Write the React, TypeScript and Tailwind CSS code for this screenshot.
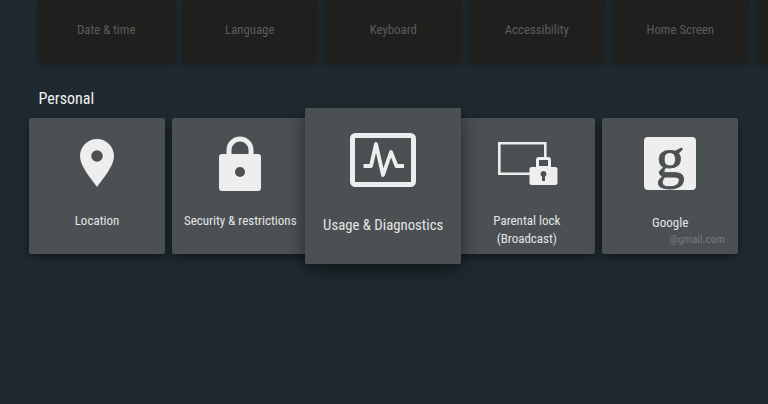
const rowFont = "font-['Roboto',sans-serif] [font-stretch:75%]";

function PinIcon() {
  return (
    <svg width="34" height="48" viewBox="0 0 34 48" className="mt-[21px]">
      <path
        fillRule="evenodd"
        d="M17 0C7.600 0 0 7.600 0 17c0 10.500 11.500 23 17 31 5.500-8 17-20.500 17-31C34 7.600 26.400 0 17 0Zm0 11.200a5.800 5.800 0 1 1 0 11.600 5.800 5.800 0 0 1 0-11.600Z"
        fill="#eeeeee"
      />
    </svg>
  );
}

function LockIcon() {
  return (
    <svg width="42" height="55" viewBox="0 0 42 55" className="mt-[18px]">
      <path d="M10 20V14a11 11 0 0 1 22 0v6" fill="none" stroke="#eeeeee" strokeWidth="5" />
      <path
        fillRule="evenodd"
        d="M3 18h36a3 3 0 0 1 3 3v31a3 3 0 0 1-3 3H3a3 3 0 0 1-3-3V21a3 3 0 0 1 3-3Zm18 13a5 5 0 1 0 0 10 5 5 0 0 0 0-10Z"
        fill="#eeeeee"
      />
    </svg>
  );
}

function PulseIcon() {
  return (
    <svg width="66" height="54" viewBox="0 0 66 54" className="mt-[25px]">
      <rect x="2.500" y="2.500" width="61" height="49" rx="3" fill="none" stroke="#eeeeee" strokeWidth="5" />
      <path
        d="M13.500 33H21L26 11 33 42 41 19 46.500 33H54"
        fill="none"
        stroke="#eeeeee"
        strokeWidth="3.800"
        strokeLinejoin="round"
      />
    </svg>
  );
}

function ScreenLockIcon() {
  return (
    <svg width="60" height="43" viewBox="0 0 60 43" className="mt-[24px] ml-[3px]">
      <path d="M32 31.700H1.300V1.300h46v14" fill="none" stroke="#eeeeee" strokeWidth="2.600" />
      <path
        fillRule="evenodd"
        d="M33.500 25h24a2 2 0 0 1 2 2v14a2 2 0 0 1-2 2h-24a2 2 0 0 1-2-2V27a2 2 0 0 1 2-2Zm12 4a3 3 0 0 0-1.500 5.600V39h3v-4.400a3 3 0 0 0-1.500-5.600Z"
        fill="#eeeeee"
      />
      <path
        fillRule="evenodd"
        d="M41 15h9a3 3 0 0 1 3 3v7h-15v-7a3 3 0 0 1 3-3Zm0 3v6h9v-6Z"
        fill="#eeeeee"
      />
    </svg>
  );
}

function GoogleIcon() {
  return (
    <div className="mt-[19px] flex h-[52.500px] w-[52.500px] items-center justify-center rounded-[4px] bg-[#eeeeee]">
      <span className="-mt-[11px] font-['Liberation_Serif',serif] text-[58px] leading-none font-normal text-[#4b5053] [-webkit-text-stroke:0.8px_#4b5053] [font-stretch:100%]">
        g
      </span>
    </div>
  );
}

function DimCard({ label }: { label: string }) {
  return (
    <div className="flex h-[63px] w-[136.500px] shrink-0 items-center justify-center rounded-b-[2px] bg-[#1f201e] pb-[3px] shadow-[0_2px_6px_rgba(0,0,0,0.3)]">
      <span className="text-[12.800px] text-[#5b5c5b]">{label}</span>
    </div>
  );
}

function Card({ children }: { children: React.ReactNode }) {
  return (
    <div className="flex h-[136px] w-[136.600px] shrink-0 flex-col items-center rounded-[2px] bg-[#4b5053] shadow-[0_3px_10px_rgba(0,0,0,0.45)]">
      {children}
    </div>
  );
}

export default function App() {
  return (
    <div className={`h-[404px] w-[768px] overflow-hidden bg-[#1f2a30] ${rowFont}`}>
      <div className="flex gap-[7px] pl-[38px]">
        <DimCard label="Date & time" />
        <DimCard label="Language" />
        <DimCard label="Keyboard" />
        <DimCard label="Accessibility" />
        <DimCard label="Home Screen" />
        <DimCard label="" />
      </div>

      <h2 className="mt-[25px] pl-[38.500px] text-[16px] leading-[22px] font-normal text-[#f1f1f1]">Personal</h2>

      <div className="mt-[-2px] flex h-[156px] items-center gap-[6.700px] pl-[28.700px]">
        <Card>
          <PinIcon />
          <span className="mt-[25px] text-[13px] leading-[18px] text-[#e4e5e5]">Location</span>
        </Card>
        <Card>
          <LockIcon />
          <span className="mt-[21px] whitespace-nowrap text-[13px] leading-[18px] text-[#e4e5e5]">
            Security & restrictions
          </span>
        </Card>
        <div className="relative z-10 -mr-[9.300px] -ml-[10.100px] flex h-[156px] w-[156px] shrink-0 flex-col items-center rounded-[2px] bg-[#4b5053] shadow-[0_6px_18px_rgba(0,0,0,0.5)]">
          <PulseIcon />
          <span className="mt-[28px] text-[14.800px] leading-[20px] text-[#e4e5e5]">Usage & Diagnostics</span>
        </div>
        <Card>
          <ScreenLockIcon />
          <span className="mt-[27px] text-center text-[13px] leading-[18px] text-[#e4e5e5]">
            Parental lock
            <br />
            (Broadcast)
          </span>
        </Card>
        <Card>
          <GoogleIcon />
          <span className="mt-[24px] text-[13px] leading-[18px] text-[#e4e5e5]">Google</span>
          <span className="mt-[0.500px] w-full pr-[13.500px] text-right text-[11.300px] leading-[16px] text-[#767b7e]">@gmail.com</span>
        </Card>
      </div>
    </div>
  );
}
